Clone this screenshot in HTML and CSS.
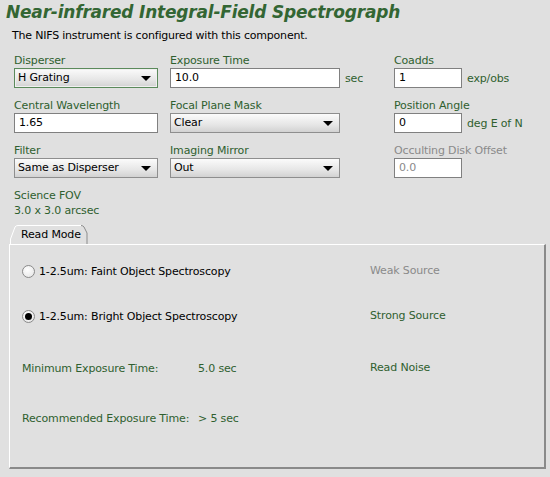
FILE: index.html
```html
<!DOCTYPE html>
<html lang="en">
<head>
  <meta charset="UTF-8" />
  <title>NIFS Component Editor</title>
  <link rel="stylesheet" href="styles.css">
</head>
<body>
  <div class="editor">
    <h1 class="title">Near-infrared Integral-Field Spectrograph</h1>
    <p class="intro">The NIFS instrument is configured with this component.</p>

    <div class="fields">
      <div class="field">
        <label>Disperser</label>
        <div class="control">
          <div class="combo focused" style="width:144px"><span>H Grating</span><i class="arrow"></i></div>
        </div>
      </div>
      <div class="field">
        <label>Exposure Time</label>
        <div class="control">
          <div class="text-input" style="width:170px">10.0</div><span class="unit">sec</span>
        </div>
      </div>
      <div class="field">
        <label>Coadds</label>
        <div class="control">
          <div class="text-input" style="width:68px">1</div><span class="unit">exp/obs</span>
        </div>
      </div>

      <div class="field">
        <label>Central Wavelength</label>
        <div class="control">
          <div class="text-input" style="width:144px">1.65</div>
        </div>
      </div>
      <div class="field">
        <label>Focal Plane Mask</label>
        <div class="control">
          <div class="combo" style="width:170px"><span>Clear</span><i class="arrow"></i></div>
        </div>
      </div>
      <div class="field">
        <label>Position Angle</label>
        <div class="control">
          <div class="text-input" style="width:68px">0</div><span class="unit">deg E of N</span>
        </div>
      </div>

      <div class="field">
        <label>Filter</label>
        <div class="control">
          <div class="combo" style="width:144px"><span>Same as Disperser</span><i class="arrow"></i></div>
        </div>
      </div>
      <div class="field">
        <label>Imaging Mirror</label>
        <div class="control">
          <div class="combo" style="width:170px"><span>Out</span><i class="arrow"></i></div>
        </div>
      </div>
      <div class="field disabled">
        <label>Occulting Disk Offset</label>
        <div class="control">
          <div class="text-input" style="width:68px">0.0</div>
        </div>
      </div>
    </div>

    <div class="fov">
      <div>Science FOV</div>
      <div>3.0 x 3.0 arcsec</div>
    </div>

    <div class="tabs">
      <div class="tab">
        <svg class="tab-edge" width="78" height="19" viewBox="0 0 78 19">
          <path d="M0.5 19 L0.5 14 L5 2 Q6 0.5 8 0.5 L71 0.5" fill="none" stroke="#ffffff" stroke-width="1"/>
          <path d="M71 0.5 Q73 0.5 74 2 L77 8 L77 19" fill="none" stroke="#8c8c8c" stroke-width="1"/>
        </svg>
        <span>Read Mode</span>
      </div>
    </div>

    <div class="panel">
      <div class="panel-row">
        <div class="radio-item"><span class="radio"></span>1-2.5um: Faint Object Spectroscopy</div>
        <div class="note muted">Weak Source</div>
      </div>
      <div class="panel-row">
        <div class="radio-item"><span class="radio checked"></span>1-2.5um: Bright Object Spectroscopy</div>
        <div class="note">Strong Source</div>
      </div>
      <div class="panel-row">
        <div class="stat"><span class="stat-label">Minimum Exposure Time:</span><span>5.0 sec</span></div>
        <div class="note">Read Noise</div>
      </div>
      <div class="panel-row">
        <div class="stat"><span class="stat-label">Recommended Exposure Time:</span><span>&gt; 5 sec</span></div>
      </div>
    </div>
  </div>
</body>
</html>
```

FILE: styles.css
```css
body {
  margin: 0;
  background: #e0e0e0;
  font-family: "DejaVu Sans", sans-serif;
  font-size: 11px;
  letter-spacing: -0.15px;
  color: #2f5f2f;
}

.editor {
  width: 550px;
  height: 477px;
  position: relative;
}

.title {
  margin: 0;
  padding: 1px 0 0 6px;
  height: 23px;
  font-size: 17px;
  font-weight: bold;
  font-style: oblique;
  letter-spacing: -0.2px;
  color: #336633;
  line-height: 22px;
}

.intro {
  margin: 5px 0 0 12px;
  color: #000;
  line-height: 14px;
  letter-spacing: -0.2px;
}

.fields {
  display: grid;
  grid-template-columns: 156px 224px 1fr;
  row-gap: 11px;
  margin: 11px 0 0 14px;
}

.field label {
  display: block;
  line-height: 14px;
}

.field.disabled label {
  color: #8a8a8a;
}

.control {
  display: flex;
  align-items: center;
  height: 20px;
}

.text-input,
.combo {
  box-sizing: border-box;
  height: 20px;
  border: 1px solid #808080;
  line-height: 18px;
  color: #000;
  padding-left: 4px;
}

.text-input {
  background: #fff;
}

.field.disabled .text-input {
  color: #8a8a8a;
}

.combo {
  display: flex;
  align-items: center;
  justify-content: space-between;
  padding: 0 6px 0 3px;
  background: linear-gradient(#fbfbfb, #e6e6e6 60%, #d2d2d2);
  border-color: #8e8e8e;
}

.combo.focused {
  border-color: #5b8a5b;
  box-shadow: inset 0 0 0 1px #f0f0f0;
}

.arrow {
  width: 0;
  height: 0;
  border-left: 5px solid transparent;
  border-right: 5px solid transparent;
  border-top: 5px solid #000;
}

.unit {
  margin-left: 5px;
}

.fov {
  margin: 10px 0 0 14px;
  line-height: 15px;
}

.tabs {
  display: flex;
  margin: 7px 0 0 10px;
}

.tab {
  position: relative;
  width: 78px;
  height: 19px;
  color: #000;
}

.tab span {
  position: relative;
  display: block;
  padding: 3px 0 0 11px;
  line-height: 13px;
}

.tab-edge {
  position: absolute;
  left: 0;
  top: 0;
}

.panel {
  box-sizing: border-box;
  margin-left: 9px;
  width: 537px;
  height: 225px;
  border-top: 1px solid #fff;
  border-left: 1px solid #fff;
  border-right: 2px solid #8a8a8a;
  border-bottom: 2px solid #8a8a8a;
  padding: 18px 0 0 12px;
}

.panel-row {
  display: grid;
  grid-template-columns: 348px 1fr;
  align-items: center;
  height: 16px;
  margin-bottom: 29px;
}

.panel-row:nth-child(2) {
  margin-bottom: 36px;
}

.panel-row:nth-child(3) {
  margin-bottom: 34px;
}

.radio-item {
  display: flex;
  align-items: center;
  color: #000;
}

.radio {
  box-sizing: border-box;
  width: 13px;
  height: 13px;
  border: 1px solid #8a8a8a;
  border-radius: 50%;
  background: radial-gradient(circle at 40% 35%, #ffffff, #e2e2e2);
  margin-right: 4px;
  position: relative;
}

.radio.checked::after {
  content: "";
  position: absolute;
  left: 2px;
  top: 2px;
  width: 7px;
  height: 7px;
  border-radius: 50%;
  background: #000;
}

.stat {
  display: flex;
}

.stat-label {
  width: 176px;
}

.note {
  line-height: 16px;
}

.note.muted {
  color: #8a8a8a;
}
```
